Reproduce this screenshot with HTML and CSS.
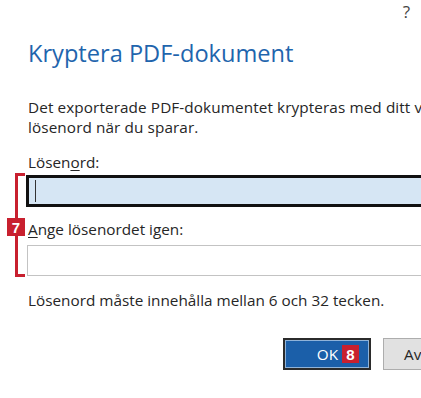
FILE: index.html
```html
<!DOCTYPE html>
<html lang="sv">
<head>
  <meta charset="UTF-8">
  <title>Kryptera PDF-dokument</title>
  <link rel="stylesheet" href="styles.css">
</head>
<body>
  <div class="dialog">
    <div class="titlebar">
      <span class="help">?</span>
      <span class="close">✕</span>
    </div>

    <h1 class="title">Kryptera PDF-dokument</h1>

    <p class="intro">
      <span class="line">Det exporterade PDF-dokumentet krypteras med ditt valda</span>
      <span class="line">lösenord när du sparar.</span>
    </p>

    <div class="fields">
      <!-- annotation bracket + badge -->
      <div class="bracket"></div>
      <div class="badge badge-7">7</div>

      <label class="label" for="pw">Lösen<u>o</u>rd:</label>
      <div class="input focused"><span class="caret"></span></div>

      <label class="label label-2" for="pw2"><u>A</u>nge lösenordet igen:</label>
      <div class="input"></div>
    </div>

    <p class="hint">Lösenord måste innehålla mellan 6 och 32 tecken.</p>

    <div class="buttons">
      <button class="btn btn-primary">OK <span class="badge badge-8">8</span></button>
      <button class="btn">Avbryt</button>
    </div>
  </div>
</body>
</html>
```

FILE: styles.css
```css
html, body {
  margin: 0;
  background: #fff;
  overflow: hidden;
}
body {
  width: 421px;
  height: 398px;
  font-family: "Open Sans", "Noto Sans", Arial, sans-serif;
  color: #262626;
}
.dialog {
  width: 500px;
  box-sizing: border-box;
  padding: 0 29px 0 28px;
}
.titlebar {
  display: flex;
  justify-content: flex-end;
  align-items: flex-start;
  gap: 18px;
  height: 30px;
  padding-top: 1px;
  box-sizing: border-box;
  margin-right: 30px;
  font-size: 17px;
  line-height: 22px;
  color: #444;
}
.close {
  font-size: 15px;
}
.title {
  margin: 7px 0 0;
  font-size: 23.6px;
  line-height: 32px;
  font-weight: 400;
  color: #1f65ad;
}
.intro {
  margin: 28px 0 0;
  font-size: 15.3px;
  line-height: 20px;
  letter-spacing: 0.1px;
}
.intro .line {
  display: block;
  white-space: nowrap;
}
.fields {
  position: relative;
  display: flex;
  flex-direction: column;
  margin-top: 15px;
}
.label {
  font-size: 15.3px;
  line-height: 20px;
}
.label u {
  text-decoration-thickness: 1px;
  text-underline-offset: 2px;
}
.label-2 {
  margin-top: 12px;
}
.input {
  height: 31px;
  margin: 6px 0 0 -1px;
  border: 1px solid #c3c3c3;
  box-sizing: border-box;
  background: #fff;
}
.input.focused {
  height: 32px;
  margin: 3px 0 0 -2px;
  border: 3px solid #111;
  background: #d6e6f4;
  display: flex;
  align-items: center;
  padding-left: 6px;
}
.caret {
  width: 1px;
  height: 22px;
  background: #333;
}
.bracket {
  position: absolute;
  left: -13px;
  top: 21px;
  width: 7px;
  height: 98px;
  border: 3px solid #c8202f;
  border-right: none;
}
.badge {
  display: inline-flex;
  align-items: center;
  justify-content: center;
  background: #c8202f;
  color: #fff;
  font-family: "Liberation Sans", Arial, sans-serif;
  font-weight: 700;
  font-size: 15px;
}
.badge-7 {
  position: absolute;
  left: -21px;
  top: 66px;
  width: 18px;
  height: 18px;
}
.hint {
  margin: 14px 0 0;
  font-size: 15.3px;
  line-height: 20px;
}
.buttons {
  display: flex;
  justify-content: flex-end;
  gap: 12px;
  margin-top: 28px;
}
.btn {
  width: 88px;
  height: 32px;
  font-family: "Open Sans", "Noto Sans", Arial, sans-serif;
  font-size: 15.3px;
  color: #262626;
  background: #e1e1e1;
  border: 1px solid #adadad;
  padding: 0;
}
.btn-primary {
  display: flex;
  align-items: center;
  justify-content: flex-end;
  gap: 4px;
  padding-right: 10px;
  background: #1b5fa9;
  color: #fff;
  border: 2px solid #2b2b2b;
  box-shadow: inset 0 0 0 1px #8fb3d9;
}
.badge-8 {
  width: 17px;
  height: 18px;
}
```
